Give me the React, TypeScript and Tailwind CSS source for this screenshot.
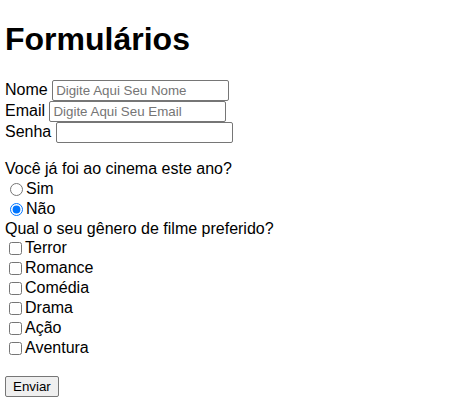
const field =
  "w-[177px] h-[21px] border border-[#767676] rounded-[2px] bg-white px-[3px] align-baseline text-[13.333px] leading-[normal] text-black placeholder:text-[#757575]";

const generos = ["Terror", "Romance", "Comédia", "Drama", "Ação", "Aventura"];

export default function App() {
  return (
    <div className="min-h-screen bg-white px-[5px] pt-[21px] font-['Liberation_Sans',Arial,sans-serif] text-base leading-[normal] text-black">
      <h1 className="mb-[22px] h-[37px] text-[32px] leading-[37px] font-bold">Formulários</h1>

      <form onSubmit={(e) => e.preventDefault()}>
        <div className="h-[21px]">
          Nome <input type="text" placeholder="Digite Aqui Seu Nome" className={field} />
        </div>
        <div className="h-[21px]">
          Email <input type="email" placeholder="Digite Aqui Seu Email" className={field} />
        </div>
        <div className="h-[21px]">
          Senha <input type="password" className={field} />
        </div>

        <div className="mt-[16px] h-[20px] leading-[20px]">Você já foi ao cinema este ano?</div>
        <label className="flex h-[20px] items-center leading-[20px]">
          <input type="radio" name="cinema" className="mr-[3px] ml-[5px] h-[13px] w-[13px]" />
          Sim
        </label>
        <label className="flex h-[20px] items-center leading-[20px]">
          <input type="radio" name="cinema" defaultChecked className="mr-[3px] ml-[5px] h-[13px] w-[13px]" />
          Não
        </label>

        <div className="h-[19px] leading-[19px]">Qual o seu gênero de filme preferido?</div>
        {generos.map((g) => (
          <label key={g} className="flex h-[20px] items-center leading-[20px]">
            <input type="checkbox" className="mt-[1px] mr-[3px] ml-[4px] h-[13px] w-[13px]" />
            {g}
          </label>
        ))}

        <button
          type="submit"
          className="mt-[18px] block h-[21px] rounded-[2px] border border-[#767676] bg-[#efefef] px-[7px] text-[13.333px] leading-[normal] text-black"
        >
          Enviar
        </button>
      </form>
    </div>
  );
}
